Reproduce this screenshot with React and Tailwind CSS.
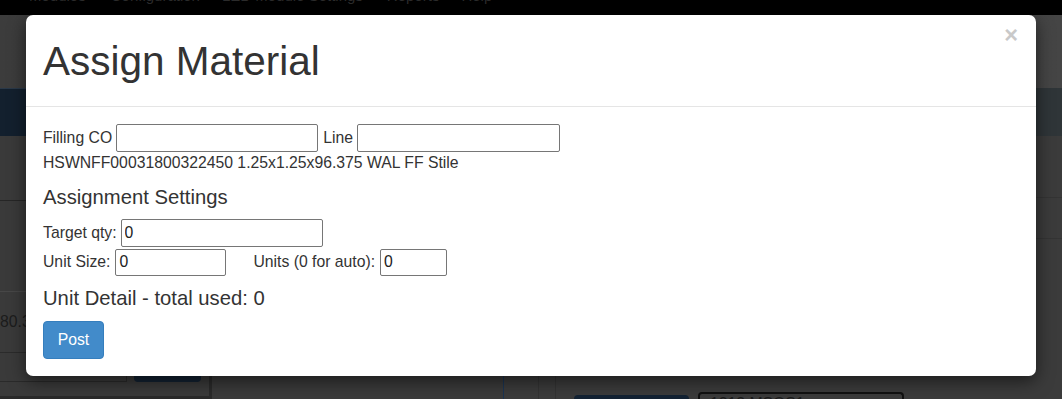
import { useState } from "react";

const font = "font-['Liberation_Sans',Arial,Helvetica,sans-serif]";

function Backdrop() {
  const navItems = [
    ["Modules", "ml-[29px]"],
    ["Configuration", "ml-[25px]"],
    ["LED Module Settings", "ml-[22px]"],
    ["Reports", "ml-[24px]"],
    ["Help", "ml-[22px]"],
  ];

  return (
    <div className="flex flex-col h-full">
      <div className="h-[15px] bg-black overflow-hidden shrink-0">
        <div className="flex -mt-[12px] text-[15px] leading-[15px] text-[#2c2c2c]">
          {navItems.map(([label, ml]) => (
            <span key={label} className={ml}>
              {label}
            </span>
          ))}
        </div>
      </div>

      <div className="h-[73px] shrink-0 bg-gradient-to-r from-[#3c3c3c] to-[#454545]" />

      <div className="h-[48px] shrink-0 flex">
        <div className="w-[531px] bg-[#13202e] border-t border-[#2a3949]" />
        <div className="flex-1 bg-[#2f3538]" />
      </div>

      <div className="flex flex-1">
        {/* left panel */}
        <div className="w-[503px] flex flex-col bg-[#3a3a3a]">
          <div className="h-[65px] border-b border-[#262626]" />
          <div className="h-[91px] border-b border-[#474747]" />
          <div className="h-[61px] flex items-center border-b border-[#2b2b2b] text-[15.75px] text-[#1c1c1c]">
            <span>80.35</span>
          </div>
          <div className="flex-1 w-[212px] border-r-[3px] border-b-[3px] border-[#2a2a2a]">
            <div className="flex items-end h-[35px] pb-[6px]">
              <div className="w-[127px] h-full border-b border-r border-[#2a2a2a]" />
              <div className="ml-[7px] w-[67px] h-[12px] rounded-b-[4px] bg-[#132233]" />
            </div>
          </div>
        </div>

        {/* right panel */}
        <div className="flex-1 flex flex-col border-l border-[#1b3452] bg-[#3b3b3b]">
          <div className="h-[61px]" />
          <div className="h-[42px] border-y border-[#343434]" />
          <div className="flex-1 flex">
            <div className="w-[35px] border-r border-[#333]" />
            <div className="w-[17px] border-r border-[#333]" />
            <div className="flex-1 flex items-end pl-[18px] gap-[9px]">
              <div className="w-[115px] h-[4px] rounded-t-[4px] bg-[#132233]" />
              <div className="w-[206px] h-[7px] rounded-t-[4px] border-2 border-b-0 border-[#111] overflow-hidden">
                <div className="text-[15.75px] leading-[20px] pl-[10px] text-[#1a1a1a]">
                  1212 MSOS1
                </div>
              </div>
            </div>
          </div>
        </div>
      </div>
    </div>
  );
}

function Field({ width, height = "h-[28px]", value = "" }) {
  const [val, setVal] = useState(value);
  return (
    <input
      type="text"
      value={val}
      onChange={(e) => setVal(e.target.value)}
      className={`${width} ${height} border border-[#767676] rounded-[2px] px-[3px] text-[15.75px] text-[#222] bg-white outline-none`}
    />
  );
}

export default function App() {
  return (
    <div className={`relative w-[1062px] h-[399px] overflow-hidden bg-[#3b3b3b] ${font}`}>
      <Backdrop />

      {/* modal */}
      <div className="absolute left-[26px] top-[15px] w-[1010px] bg-white rounded-[7px] shadow-[0_5px_17px_rgba(0,0,0,0.55)] text-[#333]">
        <div className="relative px-[17px] pt-[17px] pb-[16px] border-b border-[#e5e5e5]">
          <button className="absolute right-[18px] top-[9px] text-[23.6px] font-bold leading-none text-[#c9c9c9]">
            ×
          </button>
          <h1 className="text-[40.5px] leading-[58px] font-normal">
            Assign Material
          </h1>
        </div>

        <div className="p-[17px] text-[15.75px] leading-[22.5px]">
          <div className="flex items-center gap-[4px]">
            <span>Filling CO</span>
            <Field width="w-[202px]" />
            <span className="ml-[1px]">Line</span>
            <Field width="w-[203px]" />
          </div>
          <div>HSWNFF00031800322450 1.25x1.25x96.375 WAL FF Stile</div>

          <h4 className="mt-[11px] mb-[11px] text-[20.25px] leading-[22.3px] font-normal">
            Assignment Settings
          </h4>

          <div className="flex items-center gap-[4px]">
            <span>Target qty:</span>
            <Field width="w-[202px]" value="0" />
          </div>
          <div className="flex items-center gap-[5px] mt-[2px]">
            <span>Unit Size:</span>
            <Field width="w-[111px]" height="h-[27px]" value="0" />
            <span className="ml-[22px]">Units (0 for auto):</span>
            <Field width="w-[67px]" height="h-[27px]" value="0" />
          </div>

          <h4 className="mt-[11px] mb-[12px] text-[20.25px] leading-[22.3px] font-normal">
            Unit Detail - total used: 0
          </h4>

          <button className="w-[61px] h-[38px] bg-[#428bca] border border-[#357ebd] rounded-[4px] text-white text-[15.75px]">
            Post
          </button>
        </div>
      </div>
    </div>
  );
}
